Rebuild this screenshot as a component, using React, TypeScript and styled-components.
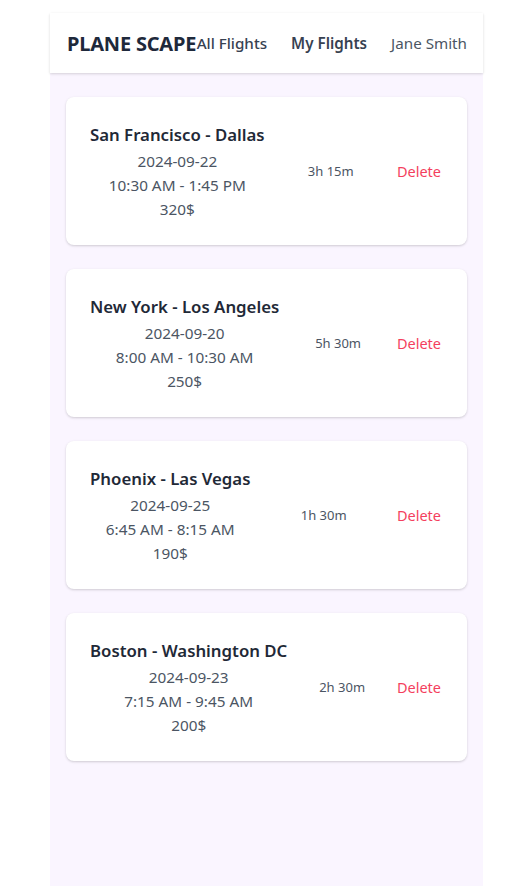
import React from "react";
import styled, { createGlobalStyle } from "styled-components";

const Global = createGlobalStyle`
  html, body { margin: 0; padding: 0; background: #ffffff; }
  body { font-family: "Noto Sans", "Open Sans", sans-serif; }
  * { box-sizing: border-box; }
`;

const Page = styled.div`
  padding: 13px 40px 0 50px;
`;

const Shell = styled.div`
  width: 433px;
  min-height: 873px;
  background: #faf5ff;
  display: flex;
  flex-direction: column;
`;

const Header = styled.header`
  height: 60px;
  background: #ffffff;
  box-shadow: 0 1px 3px rgba(0, 0, 0, 0.1), 0 1px 2px rgba(0, 0, 0, 0.06);
  display: flex;
  align-items: center;
  justify-content: space-between;
  padding: 0 16px 0 17px;
  white-space: nowrap;
`;

const Logo = styled.div`
  font-size: 20px;
  font-weight: 700;
  color: #1e293b;
  letter-spacing: -0.2px;
`;

const Nav = styled.nav`
  display: flex;
  align-items: center;
  gap: 24px;
`;

const NavItem = styled.span<{ $weight: number; $color: string }>`
  font-size: 15.2px;
  font-weight: ${(p) => p.$weight};
  color: ${(p) => p.$color};
`;

const List = styled.main`
  display: flex;
  flex-direction: column;
  gap: 24px;
  padding: 24px 16px;
`;

const Card = styled.div`
  background: #ffffff;
  border-radius: 8px;
  box-shadow: 0 1px 3px rgba(0, 0, 0, 0.12), 0 1px 2px rgba(0, 0, 0, 0.06);
  padding: 24px 26px 24px 24px;
  display: flex;
  align-items: center;
  justify-content: space-between;
`;

const Info = styled.div`
  display: flex;
  flex-direction: column;
  align-items: center;
`;

const Route = styled.div`
  font-size: 16.8px;
  font-weight: 600;
  color: #1f2937;
  line-height: 28px;
`;

const Detail = styled.div`
  font-size: 15.3px;
  color: #4b5563;
  line-height: 24px;
`;

const Duration = styled.div`
  font-size: 13px;
  color: #4b5563;
`;

const DeleteButton = styled.button`
  background: none;
  border: none;
  padding: 0;
  font-family: inherit;
  font-size: 14.5px;
  color: #f43f5e;
  cursor: pointer;
`;

const flights = [
  { route: "San Francisco - Dallas", date: "2024-09-22", time: "10:30 AM - 1:45 PM", price: "320$", duration: "3h 15m" },
  { route: "New York - Los Angeles", date: "2024-09-20", time: "8:00 AM - 10:30 AM", price: "250$", duration: "5h 30m" },
  { route: "Phoenix - Las Vegas", date: "2024-09-25", time: "6:45 AM - 8:15 AM", price: "190$", duration: "1h 30m" },
  { route: "Boston - Washington DC", date: "2024-09-23", time: "7:15 AM - 9:45 AM", price: "200$", duration: "2h 30m" },
];

export default function App() {
  return (
    <>
      <Global />
      <Page>
        <Shell>
          <Header>
            <Logo>PLANE SCAPE</Logo>
            <Nav>
              <NavItem $weight={500} $color="#374151">All Flights</NavItem>
              <NavItem $weight={600} $color="#374151">My Flights</NavItem>
              <NavItem $weight={400} $color="#4b5563">Jane Smith</NavItem>
            </Nav>
          </Header>
          <List>
            {flights.map((f) => (
              <Card key={f.route}>
                <Info>
                  <Route>{f.route}</Route>
                  <Detail>{f.date}</Detail>
                  <Detail>{f.time}</Detail>
                  <Detail>{f.price}</Detail>
                </Info>
                <Duration>{f.duration}</Duration>
                <DeleteButton>Delete</DeleteButton>
              </Card>
            ))}
          </List>
        </Shell>
      </Page>
    </>
  );
}
